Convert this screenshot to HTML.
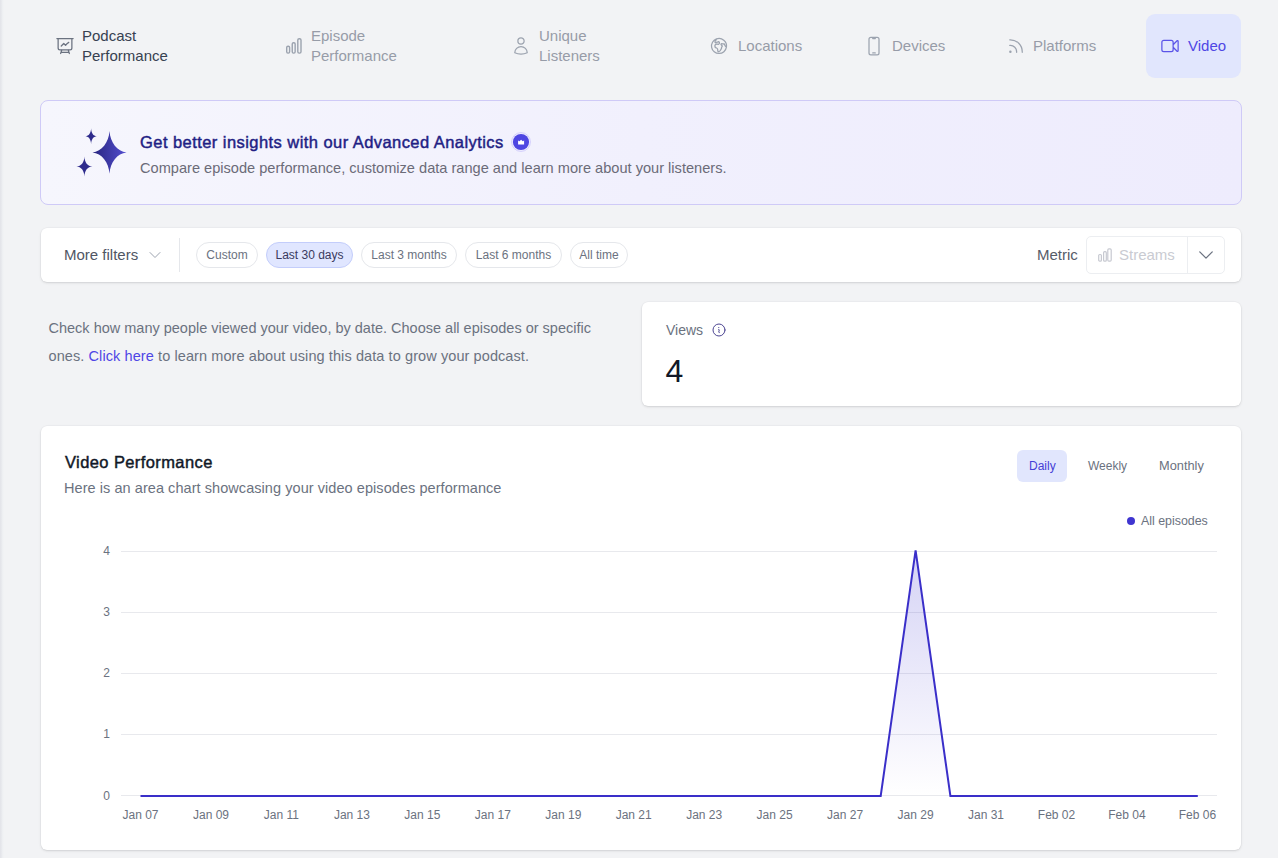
<!DOCTYPE html>
<html><head><meta charset="utf-8">
<style>
*{box-sizing:border-box;margin:0;padding:0}
html,body{width:1278px;height:858px;overflow:hidden}
body{background:#f2f3f5;font-family:"Liberation Sans",sans-serif;position:relative;color:#374151}
.abs{position:absolute}
.edge{left:0;top:0;width:4px;height:858px;background:linear-gradient(90deg,#e4e5ea 0,#e4e5ea 1px,#eceef1 2px,#f2f3f5 4px)}
.nav{font-size:15px;line-height:20px;color:#979ca8;white-space:nowrap}
.nav svg{position:absolute}
.banner{left:40px;top:100px;width:1202px;height:105px;border:1px solid #cfcaf7;border-radius:8px;background:linear-gradient(90deg,#f6f6fd 0%,#f1f0fd 50%,#eeecfd 100%)}
.card{background:#fff;border-radius:6px;box-shadow:0 0 0 .5px rgba(17,24,39,.04),0 1px 3px 0 rgba(0,0,0,.1),0 1px 2px -1px rgba(0,0,0,.1)}
.chip{position:absolute;top:242px;height:26px;border:1px solid #e5e7eb;border-radius:13px;font-size:12px;line-height:24px;color:#6b7280;padding:0 8px;white-space:nowrap;text-align:center}
.chip.on{background:#e0e6ff;border-color:#c3cdfb;color:#3a3a5e}
</style></head>
<body>
<div class="abs edge"></div>

<!-- NAV -->
<div class="abs nav" style="left:82px;top:26px;color:#374151">Podcast<br>Performance</div>
<svg class="abs" style="left:55px;top:36px" width="20" height="20" viewBox="0 0 24 24" fill="none" stroke="#6b7280" stroke-width="1.5" stroke-linecap="round" stroke-linejoin="round"><path d="M3.75 3v11.25A2.25 2.25 0 0 0 6 16.5h2.25M3.75 3h-1.5m1.5 0h16.5m0 0h1.5m-1.5 0v11.25A2.25 2.25 0 0 1 18 16.5h-2.25m-7.5 0h7.5m-7.5 0-1 3m8.5-3 1 3m0 0 .5 1.5m-.5-1.5h-9.5m0 0-.5 1.5m.75-9 3-3 2.148 2.148A12.061 12.061 0 0 1 16.5 7.605"/></svg>

<div class="abs nav" style="left:311px;top:26px">Episode<br>Performance</div>
<svg class="abs" style="left:285px;top:37px" width="18" height="18" viewBox="0 0 18 18" fill="none" stroke="#9ca3af" stroke-width="1.4">
<rect x="1.7" y="9.2" width="2.9" height="6.9" rx="1.3"/><rect x="7.25" y="5.7" width="2.9" height="10.4" rx="1.3"/><rect x="12.8" y="1.7" width="3.2" height="14.4" rx="1.4"/>
</svg>

<div class="abs nav" style="left:539px;top:26px">Unique<br>Listeners</div>
<svg class="abs" style="left:511px;top:36px" width="20" height="20" viewBox="0 0 24 24" fill="none" stroke="#9ca3af" stroke-width="1.5" stroke-linecap="round" stroke-linejoin="round"><path d="M15.75 6a3.75 3.75 0 1 1-7.5 0 3.75 3.75 0 0 1 7.5 0ZM4.501 20.118a7.5 7.5 0 0 1 14.998 0A17.933 17.933 0 0 1 12 21.75c-2.676 0-5.216-.584-7.499-1.632Z"/></svg>

<div class="abs nav" style="left:738px;top:36px">Locations</div>
<svg class="abs" style="left:709px;top:36px" width="20" height="20" viewBox="0 0 24 24" fill="none" stroke="#9ca3af" stroke-width="1.5" stroke-linecap="round" stroke-linejoin="round"><path d="m20.893 13.393-1.135-1.135a2.252 2.252 0 0 1-.421-.585l-1.08-2.16a.414.414 0 0 0-.663-.107.827.827 0 0 1-.812.21l-1.273-.363a.89.89 0 0 0-.738 1.595l.587.39c.59.395.674 1.23.172 1.732l-.2.2c-.212.212-.33.498-.33.796v.41c0 .409-.11.809-.32 1.158l-1.315 2.191a2.11 2.11 0 0 1-1.81 1.025 1.055 1.055 0 0 1-1.055-1.055v-1.172c0-.92-.56-1.747-1.414-2.089l-.655-.261a2.25 2.25 0 0 1-1.383-2.46l.007-.042a2.25 2.25 0 0 1 .29-.787l.09-.15a2.25 2.25 0 0 1 2.37-1.048l1.178.236a1.125 1.125 0 0 0 1.302-.795l.208-.73a1.125 1.125 0 0 0-.578-1.315l-.665-.332-.091.091a2.25 2.25 0 0 1-1.591.659h-.18c-.249 0-.487.1-.662.274a.931.931 0 0 1-1.458-1.137l1.411-2.353a2.25 2.25 0 0 0 .286-.76m11.928 9.869A9 9 0 0 0 8.965 3.525m11.928 9.868A9 9 0 1 1 8.965 3.525"/></svg>

<div class="abs nav" style="left:892px;top:36px">Devices</div>
<svg class="abs" style="left:864px;top:36px" width="20" height="20" viewBox="0 0 24 24" fill="none" stroke="#9ca3af" stroke-width="1.5" stroke-linecap="round" stroke-linejoin="round"><path d="M10.5 1.5H8.25A2.25 2.25 0 0 0 6 3.75v16.5a2.25 2.25 0 0 0 2.25 2.25h7.5A2.25 2.25 0 0 0 18 20.25V3.75a2.25 2.25 0 0 0-2.25-2.25H13.5m-3 0V3h3V1.5m-3 0h3m-3 18.75h3"/></svg>

<div class="abs nav" style="left:1033px;top:36px">Platforms</div>
<svg class="abs" style="left:1006px;top:36px" width="20" height="20" viewBox="0 0 24 24" fill="none" stroke="#9ca3af" stroke-width="1.5" stroke-linecap="round" stroke-linejoin="round"><path d="M12.75 19.5v-.75a7.5 7.5 0 0 0-7.5-7.5H4.5m0-6.75h.75c7.87 0 14.25 6.38 14.25 14.25v.75M6 18.75a.75.75 0 1 1-1.5 0 .75.75 0 0 1 1.5 0Z"/></svg>

<div class="abs" style="left:1146px;top:14px;width:95px;height:64px;background:#e1e6fd;border-radius:9px"></div>
<svg class="abs" style="left:1160px;top:36px" width="20" height="20" viewBox="0 0 24 24" fill="none" stroke="#5b54e8" stroke-width="1.5" stroke-linecap="round" stroke-linejoin="round"><path d="m15.75 10.5 4.72-4.72a.75.75 0 0 1 1.28.53v11.38a.75.75 0 0 1-1.28.53l-4.72-4.72M4.5 18.75h9a2.25 2.25 0 0 0 2.25-2.25v-9a2.25 2.25 0 0 0-2.25-2.25h-9A2.25 2.25 0 0 0 2.25 7.5v9a2.25 2.25 0 0 0 2.25 2.25Z"/></svg>
<div class="abs nav" style="left:1188px;top:36px;color:#4f46e5">Video</div>

<!-- BANNER -->
<div class="abs banner"></div>
<svg class="abs" style="left:70px;top:124px" width="60" height="56" viewBox="0 0 60 56">
<defs><linearGradient id="sg" x1="0" y1="0" x2="1" y2="0"><stop offset="0" stop-color="#28257e"/><stop offset="1" stop-color="#544fd0"/></linearGradient></defs>
<path d="M39.50 7.00C40.18 18.56 47.32 27.54 56.50 28.40C47.32 29.26 40.18 38.24 39.50 49.80C38.82 38.24 31.68 29.26 22.50 28.40C31.68 27.54 38.82 18.56 39.50 7.00Z" fill="url(#sg)"/>
<path d="M21.10 4.30C21.27 9.10 23.34 12.06 26.70 12.30C23.34 12.54 21.27 15.50 21.10 20.30C20.93 15.50 18.86 12.54 15.50 12.30C18.86 12.06 20.93 9.10 21.10 4.30Z" fill="#2e2b8c"/>
<path d="M14.40 32.40C14.64 38.40 17.60 42.10 22.40 42.40C17.60 42.70 14.64 46.40 14.40 52.40C14.16 46.40 11.20 42.70 6.40 42.40C11.20 42.10 14.16 38.40 14.40 32.40Z" fill="#2e2b8c"/>
</svg>
<div class="abs" style="left:140px;top:131px;font-size:16.5px;line-height:22px;font-weight:400;letter-spacing:.44px;-webkit-text-stroke:.45px #221e84;color:#221e84;white-space:nowrap">Get better insights with our Advanced Analytics</div>
<svg class="abs" style="left:511px;top:132px" width="20" height="20" viewBox="0 0 20 20">
<circle cx="10" cy="10" r="9.4" fill="none" stroke="#d2cdfc" stroke-width="1"/><circle cx="10" cy="10" r="8.1" fill="#4e46e2"/><path d="M7.1 12.4V8.3Q8 9.6 8.7 9L10.1 7.7 11.5 9Q12.2 9.6 13.1 8.3V12.4Z" fill="#fff"/>
</svg>
<div class="abs" style="left:140px;top:158px;font-size:14.6px;line-height:20px;color:#6b6b78;white-space:nowrap">Compare episode performance, customize data range and learn more about your listeners.</div>

<!-- FILTER BAR -->
<div class="abs card" style="left:41px;top:228px;width:1200px;height:54px"></div>
<div class="abs" style="left:64px;top:245px;font-size:15px;line-height:20px;color:#505664;white-space:nowrap">More filters</div>
<svg class="abs" style="left:147px;top:247px" width="16" height="16" viewBox="0 0 24 24" fill="none" stroke="#9ca3af" stroke-width="1.5" stroke-linecap="round" stroke-linejoin="round"><path d="m19.5 8.25-7.5 7.5-7.5-7.5"/></svg>
<div class="abs" style="left:179px;top:238px;width:1px;height:34px;background:#e5e7eb"></div>
<div class="chip" style="left:196px;width:62px">Custom</div>
<div class="chip on" style="left:266px;width:87px">Last 30 days</div>
<div class="chip" style="left:361px;width:96px">Last 3 months</div>
<div class="chip" style="left:465px;width:97px">Last 6 months</div>
<div class="chip" style="left:570px;width:58px">All time</div>
<div class="abs" style="left:1037px;top:245px;font-size:15px;line-height:20px;color:#565c69;white-space:nowrap">Metric</div>
<div class="abs" style="left:1086px;top:236px;width:139px;height:38px;border:1px solid #eceef1;border-radius:5px"></div>
<div class="abs" style="left:1187px;top:237px;width:1px;height:36px;background:#eceef1"></div>
<svg class="abs" style="left:1097px;top:247px" width="16" height="16" viewBox="0 0 16 16" fill="none" stroke="#c7c9d1" stroke-width="1.2">
<rect x="1.7" y="7.5" width="2.7" height="6.7" rx="1"/><rect x="6.6" y="4.7" width="2.7" height="9.5" rx="1"/><rect x="10.8" y="1.8" width="3.4" height="12.4" rx="1.1"/>
</svg>
<div class="abs" style="left:1119px;top:245px;font-size:15px;line-height:20px;color:#c9cbd2;white-space:nowrap">Streams</div>
<svg class="abs" style="left:1196px;top:245px" width="20" height="20" viewBox="0 0 24 24" fill="none" stroke="#6b7280" stroke-width="1.5" stroke-linecap="round" stroke-linejoin="round"><path d="m19.5 8.25-7.5 7.5-7.5-7.5"/></svg>

<!-- INTRO -->
<div class="abs" style="left:48.5px;top:314px;font-size:14.5px;line-height:28px;color:#6b7280;white-space:nowrap">Check how many people viewed your video, by date. Choose all episodes or specific<br><span style="letter-spacing:.09px">ones. <span style="color:#4f46e5">Click here</span> to learn more about using this data to grow your podcast.</span></div>

<!-- VIEWS -->
<div class="abs card" style="left:642px;top:302px;width:599px;height:104px"></div>
<div class="abs" style="left:666px;top:319.5px;font-size:14px;line-height:20px;color:#6b7280">Views</div>
<svg class="abs" style="left:711px;top:322px" width="16" height="16" viewBox="0 0 24 24" fill="none" stroke="#4c4592" stroke-width="1.5" stroke-linecap="round" stroke-linejoin="round"><path d="m11.25 11.25.041-.02a.75.75 0 0 1 1.063.852l-.708 2.836a.75.75 0 0 0 1.063.853l.041-.021M21 12a9 9 0 1 1-18 0 9 9 0 0 1 18 0Zm-9-3.75h.008v.008H12V8.25Z"/></svg>
<div class="abs" style="left:665.5px;top:351.5px;font-size:32px;line-height:38px;color:#111827">4</div>

<!-- CHART CARD -->
<div class="abs card" style="left:41px;top:426px;width:1200px;height:424px"></div>
<div class="abs" style="left:65px;top:451px;font-size:16.5px;line-height:22px;font-weight:400;letter-spacing:.4px;-webkit-text-stroke:.45px #111827;color:#111827;white-space:nowrap">Video Performance</div>
<div class="abs" style="left:64px;top:478px;font-size:14.5px;line-height:20px;letter-spacing:.06px;color:#6b7280;white-space:nowrap">Here is an area chart showcasing your video episodes performance</div>
<div class="abs" style="left:1017px;top:450px;width:50px;height:32px;background:#e1e6fd;border-radius:6px"></div>
<div class="abs" style="left:1029px;top:458px;font-size:12px;line-height:16px;color:#4540d6">Daily</div>
<div class="abs" style="left:1088px;top:458px;font-size:12px;line-height:16px;color:#6b7280">Weekly</div>
<div class="abs" style="left:1159px;top:458px;font-size:12.8px;line-height:16px;color:#6b7280">Monthly</div>
<div class="abs" style="left:1127px;top:517px;width:8px;height:8px;border-radius:50%;background:#3f35d0"></div>
<div class="abs" style="left:1141px;top:513px;font-size:12.4px;line-height:16px;color:#6b7280;white-space:nowrap">All episodes</div>

<svg class="abs" style="left:0;top:0" width="1278" height="858" viewBox="0 0 1278 858">
<defs><linearGradient id="ag" x1="0" y1="550" x2="0" y2="796" gradientUnits="userSpaceOnUse"><stop offset="0" stop-color="#3f35d0" stop-opacity=".22"/><stop offset="1" stop-color="#3f35d0" stop-opacity="0"/></linearGradient></defs>
<g stroke="#e8e9ed" stroke-width="1">
<path d="M121 551.5H1217M121 612.5H1217M121 673.5H1217M121 734.5H1217M121 795.5H1217"/>
</g>
<path d="M880.7 796L915.6 550.3L950.4 796z" fill="url(#ag)"/>
<path d="M140.5 796H880.7L915.6 550.3L950.4 796H1197.8" fill="none" stroke="#3a2fc9" stroke-width="2" stroke-linejoin="miter"/>
<g font-family="Liberation Sans" font-size="12" fill="#6b7280" text-anchor="end">
<text x="110" y="555">4</text><text x="110" y="616">3</text><text x="110" y="677">2</text><text x="110" y="738">1</text><text x="110" y="800">0</text>
</g>
<g font-family="Liberation Sans" font-size="12" fill="#6b7280" text-anchor="middle">
<text x="140.5" y="819">Jan 07</text><text x="211" y="819">Jan 09</text><text x="281.4" y="819">Jan 11</text><text x="351.9" y="819">Jan 13</text><text x="422.3" y="819">Jan 15</text><text x="492.8" y="819">Jan 17</text><text x="563.3" y="819">Jan 19</text><text x="633.7" y="819">Jan 21</text><text x="704.2" y="819">Jan 23</text><text x="774.6" y="819">Jan 25</text><text x="845.1" y="819">Jan 27</text><text x="915.6" y="819">Jan 29</text><text x="986" y="819">Jan 31</text><text x="1056.5" y="819">Feb 02</text><text x="1126.9" y="819">Feb 04</text><text x="1197.4" y="819">Feb 06</text>
</g>
</svg>
</body></html>
